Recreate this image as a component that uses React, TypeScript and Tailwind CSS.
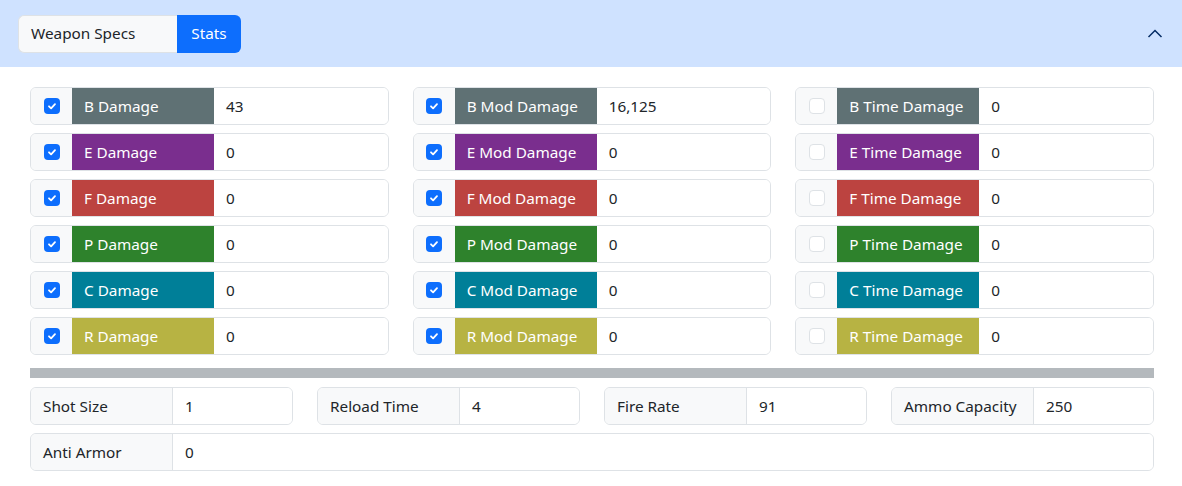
import React from 'react';

interface DamageRow {
  key: string;
  color: string;
}

const ROWS: DamageRow[] = [
  { key: 'B', color: 'bg-[#5f7174]' },
  { key: 'E', color: 'bg-[#7a2e8e]' },
  { key: 'F', color: 'bg-[#bc4340]' },
  { key: 'P', color: 'bg-[#2e822c]' },
  { key: 'C', color: 'bg-[#007f98]' },
  { key: 'R', color: 'bg-[#b7b343]' },
];

const BASE: Record<string, string> = { B: '43' };
const MOD: Record<string, string> = { B: '16,125' };

const Check = ({ checked }: { checked: boolean }) =>
  checked ? (
    <span className="flex h-4 w-4 items-center justify-center rounded-[4px] bg-[#0d6efd]">
      <svg width="12" height="12" viewBox="0 0 20 20" fill="none">
        <path d="M5 10.5l3.5 3.5 6.5-7" stroke="white" strokeWidth="3" strokeLinecap="round" strokeLinejoin="round" />
      </svg>
    </span>
  ) : (
    <span className="block h-4 w-4 rounded-[4px] border border-[#dee2e6] bg-white" />
  );

const DamageField = ({ checked, label, color, value }: { checked: boolean; label: string; color: string; value: string }) => (
  <div className="flex h-[38px] overflow-hidden rounded-md border border-[#dee2e6]">
    <div className="flex w-[41px] shrink-0 items-center justify-center bg-[#f8f9fa]">
      <Check checked={checked} />
    </div>
    <div className={`flex w-[142px] shrink-0 items-center whitespace-nowrap px-3 text-white ${color}`}>{label}</div>
    <div className="flex flex-1 items-center bg-white px-3 text-[#212529]">{value}</div>
  </div>
);

const StatField = ({ label, value, className = '' }: { label: string; value: string; className?: string }) => (
  <div className={`flex h-[38px] overflow-hidden rounded-md border border-[#dee2e6] ${className}`}>
    <div className="flex w-[142px] shrink-0 items-center whitespace-nowrap border-r border-[#dee2e6] bg-[#f8f9fa] px-3 text-[#212529]">{label}</div>
    <div className="flex flex-1 items-center bg-white px-3 text-[#212529]">{value}</div>
  </div>
);

export default function App() {
  return (
    <div className="min-h-[486px] w-[1182px] bg-white text-[15.3px]" style={{ fontFamily: '"Noto Sans", "Open Sans", sans-serif' }}>
      {/* Accordion header */}
      <div className="flex h-[67px] items-center justify-between bg-[#cfe2ff] pl-[18px] pr-[19px]">
        <div className="flex h-[38px]">
          <div className="flex w-[159px] items-center rounded-l-md border border-r-0 border-[#dee2e6] bg-[#f8f9fa] px-3 text-[#212529]">
            Weapon Specs
          </div>
          <div className="flex w-[64px] items-center justify-center rounded-r-md bg-[#0d6efd] text-white">Stats</div>
        </div>
        <svg width="16" height="16" viewBox="0 0 16 16" fill="none">
          <path d="M1.5 11l6.5-6.5 6.5 6.5" stroke="#052c65" strokeWidth="1.5" />
        </svg>
      </div>

      {/* Body */}
      <div className="pl-[30px] pr-[28px] pt-5">
        <div className="grid grid-cols-3 gap-x-6 gap-y-2">
          {ROWS.map((r) => (
            <React.Fragment key={r.key}>
              <DamageField checked label={`${r.key} Damage`} color={r.color} value={BASE[r.key] ?? '0'} />
              <DamageField checked label={`${r.key} Mod Damage`} color={r.color} value={MOD[r.key] ?? '0'} />
              <DamageField checked={false} label={`${r.key} Time Damage`} color={r.color} value="0" />
            </React.Fragment>
          ))}
        </div>

        <div className="mb-[9px] mt-[13px] h-[10px] bg-[#b4b9bd]" />

        <div className="grid grid-cols-4 gap-x-6 gap-y-2">
          <StatField label="Shot Size" value="1" />
          <StatField label="Reload Time" value="4" />
          <StatField label="Fire Rate" value="91" />
          <StatField label="Ammo Capacity" value="250" />
          <StatField label="Anti Armor" value="0" className="col-span-4" />
        </div>
      </div>
    </div>
  );
}
